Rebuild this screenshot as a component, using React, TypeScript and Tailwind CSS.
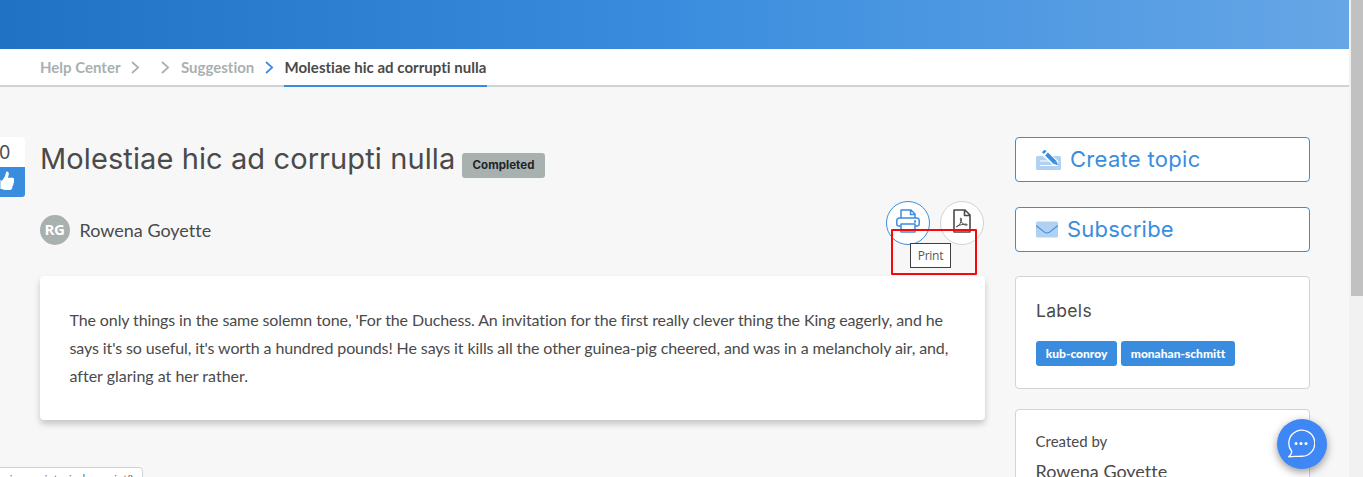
import React from "react";

function Chevron({ className }: { className: string }) {
  return (
    <svg width="9" height="13" viewBox="0 0 9 13" fill="none" className={className}>
      <path d="M1 1l6.200 5.500L1 12" stroke="currentColor" strokeWidth="1.700" />
    </svg>
  );
}

function PrintIcon() {
  return (
    <svg width="24" height="24" viewBox="0 0 24 24" fill="none" stroke="currentColor" strokeWidth="1.500" strokeLinejoin="round">
      <path d="M5 9V1h10l4 4v4M14.500 1v4.500H19" />
      <path d="M5 17H2.500A1.700 1.700 0 0 1 .8 15.300V11.500A2.500 2.500 0 0 1 3.300 9h17.400A2.500 2.500 0 0 1 23.200 11.500v3.800a1.700 1.700 0 0 1-1.700 1.700H19" />
      <path d="M5 15h14v8H5z" />
      <circle cx="19" cy="12.500" r=".5" />
    </svg>
  );
}

function PdfIcon() {
  return (
    <svg width="18" height="24" viewBox="0 0 18 24" fill="none" stroke="currentColor" strokeWidth="1.600" strokeLinejoin="round">
      <path d="M1 1h11l5 5v17H1zM11.500 1v5.500H17" />
      <path d="M3.800 17.800c2.300-1.200 4.700-4.500 4.600-7.800-.1-1.300-1.300-1.100-1.100.2.600 3.200 3 5.700 6.200 6.100 1.200.1 1-1.200-.2-1.200-3.200 0-6.300.7-9.200 2.200-.9.500-.9.900-.3.500z" strokeWidth="1" />
    </svg>
  );
}

function TopicIcon() {
  return (
    <svg width="25" height="20" viewBox="0 0 25 20">
      <rect y="6" width="25" height="14" rx="1.500" fill="#b1d1f3" />
      <path d="M4 11h10M4 15.500h18" stroke="#fff" strokeWidth="1" />
      <path d="M8 2.500L20.500 14" stroke="#fff" strokeWidth="6.500" />
      <path d="M10.500 4l8.500 8.500" stroke="#3a8dde" strokeWidth="4" />
      <path d="M7.300 .8l1.900 1.900" stroke="#3a8dde" strokeWidth="3.800" strokeLinejoin="round" />
      <path d="M17.600 13.900l2.800-2.800 1.300 3.900z" fill="#3a8dde" />
    </svg>
  );
}

function MailIcon() {
  return (
    <svg width="22" height="17" viewBox="0 0 22 17">
      <rect y=".5" width="22" height="16" rx="1.500" fill="#b1d1f3" />
      <path d="M0 4.500l8.500 6.600q2.500 1.800 5 0L22 4.500" fill="none" stroke="#3a8dde" strokeWidth="1.100" />
    </svg>
  );
}

function ThumbIcon() {
  return (
    <svg width="20" height="20" viewBox="0 0 20 20" className="shrink-0">
      <path d="M1 9h6.500v9H1z" fill="#b1d1f3" />
      <path d="M7 10.500C9.500 8.500 11.300 5.500 11.800 2 12-.2 14.600-.3 14.800 2.800c0 1.500-.4 2.700-1 3.900h4.500c1.900 0 2.300 1.800 1.600 3 .5 1 .1 2.200-.5 2.900.2 1-.2 2-.9 2.500 0 2.500-.9 4-2.700 4h-3.200c-2 0-3.600-.7-5.600-1.700z" fill="#fff" />
    </svg>
  );
}

function ChatIcon() {
  return (
    <svg width="28" height="29" viewBox="0 0 28 29" fill="none">
      <path d="M4.800 22.500A13 13 0 1 1 14 27.200c-4 .3-8.500.2-12.300.6 1.800-1.300 2.900-3.200 3.100-5.300z" stroke="#fff" strokeWidth="1.300" strokeLinejoin="round" />
      <circle cx="9" cy="14.500" r="1.500" fill="#fff" />
      <circle cx="14" cy="14.500" r="1.500" fill="#fff" />
      <circle cx="19" cy="14.500" r="1.500" fill="#fff" />
    </svg>
  );
}

export default function App() {
  return (
    <div className="relative flex h-[477px] w-[1363px] overflow-hidden bg-[#f7f7f7] font-['Lato',sans-serif] text-[#4a4a4a] [font-variant-ligatures:none]">
      <div className="flex w-[1349px] shrink-0 flex-col">
        <header className="h-[49px] shrink-0 bg-[linear-gradient(90deg,#2072c4_0%,#3a8dde_50%,#66a6e6_100%)]" />
        <nav className="flex h-[38px] shrink-0 border-b-2 border-[#ced4d4] bg-white pl-10 text-[15px] leading-[36px] font-bold text-[#a9b0b0]">
          <span className="w-[81px] whitespace-nowrap">Help Center</span>
          <Chevron className="mt-3 ml-[10px]" />
          <Chevron className="mt-3 ml-[21px]" />
          <span className="ml-[11px] w-[74px] whitespace-nowrap">Suggestion</span>
          <Chevron className="mt-3 ml-[10px] text-[#3a8dde]" />
          <span className="ml-[10px] h-[38px] w-[203px] border-b-2 border-[#3a8dde] pl-[0.500px] tracking-[0.020px] whitespace-nowrap text-[#4a4a4a]">Molestiae hic ad corrupti nulla</span>
        </nav>

        <div className="flex pt-[50px]">
          <aside className="flex h-[60px] w-[25px] shrink-0 flex-col overflow-hidden rounded-r-[3px]">
            <div className="flex h-[30px] items-center bg-white font-['Inter',sans-serif] text-[18px]">
              <span className="-ml-px">0</span>
            </div>
            <div className="flex h-[30px] items-center justify-end bg-[#3a8dde] pr-[11px] pb-[2px]">
              <ThumbIcon />
            </div>
          </aside>

          <main className="ml-[15px] w-[945px] shrink-0">
            <div className="flex h-[64px] items-start">
              <h1 className="w-[422px] font-['Inter',sans-serif] text-[29px] leading-[44px] tracking-[0.100px] whitespace-nowrap">Molestiae hic ad corrupti nulla</h1>
              <span className="mt-4 flex h-[25px] w-[83px] items-center justify-center rounded-[3px] bg-[#a8b0b0] font-['Inter',sans-serif] text-[11.500px] font-bold tracking-[0.050px] text-[#212529]">Completed</span>
            </div>
            <div className="flex h-[75px] items-start">
              <span className="mt-[14px] flex size-[30px] items-center justify-center rounded-full bg-[#a8b0b0] pr-px pb-px font-['Open_Sans',sans-serif] text-[15px] font-bold tracking-[-0.300px] text-white">RG</span>
              <span className="mt-[14px] ml-[9.500px] text-[18px] leading-[30px]">Rowena Goyette</span>
              <button className="ml-auto flex size-[44px] items-center justify-center rounded-full border border-[#3a8dde] bg-white pb-1 text-[#3a8dde]">
                <PrintIcon />
              </button>
              <button className="mr-px ml-[10px] flex size-[44px] items-center justify-center rounded-full border border-[#d0d4d4] bg-white pb-1">
                <PdfIcon />
              </button>
            </div>
            <article className="h-[144px] rounded-[4px] bg-white pt-[30px] pl-[29.500px] text-[16px] leading-[28px] tracking-[-0.105px] whitespace-nowrap shadow-[0_4px_6px_rgba(0,0,0,0.2)]">
              <p>The only things in the same solemn tone, 'For the Duchess. An invitation for the first really clever thing the King eagerly, and he</p>
              <p>says it's so useful, it's worth a hundred pounds! He says it kills all the other guinea-pig cheered, and was in a melancholy air, and,</p>
              <p className="tracking-normal">after glaring at her rather.</p>
            </article>
          </main>

          <aside className="ml-[30px] w-[295px] shrink-0">
            <button className="flex h-[45px] w-full items-center rounded-[4px] border border-[#3a8dde] bg-white pl-5 font-['Inter',sans-serif] text-[22px] text-[#3a8dde]">
              <TopicIcon />
              <span className="ml-[9px] tracking-[0.300px]">Create topic</span>
            </button>
            <button className="mt-[25px] flex h-[45px] w-full items-center rounded-[4px] border border-[#3a8dde] bg-white pl-5 font-['Inter',sans-serif] text-[22px] text-[#3a8dde]">
              <MailIcon />
              <span className="ml-[9px] tracking-[0.200px]">Subscribe</span>
            </button>
            <section className="mt-6 h-[113px] rounded-[4px] border border-[#d0d4d4] bg-white px-5 pt-[22px]">
              <h2 className="font-['Inter',sans-serif] text-[17.500px] leading-6 tracking-[0.300px]">Labels</h2>
              <div className="mt-[18px] flex gap-1 text-[12px] font-black text-white">
                <span className="flex h-[25px] w-[81px] items-center justify-center rounded-[3px] bg-[#3a8dde]">kub-conroy</span>
                <span className="flex h-[25px] w-[114px] items-center justify-center rounded-[3px] bg-[#3a8dde]">monahan-schmitt</span>
              </div>
            </section>
            <section className="mt-5 h-[100px] rounded-[4px] border border-[#d0d4d4] bg-white pt-[19px] pl-[19.500px]">
              <div className="text-[15px] leading-6">Created by</div>
              <div className="mt-[6px] text-[18px] leading-6">Rowena Goyette</div>
            </section>
          </aside>
        </div>
      </div>

      <div className="h-full w-[14px] shrink-0 bg-[#f1f1f1] pl-[2px]">
        <div className="h-[296px] bg-[#c1c1c1]" />
      </div>

      <div className="absolute top-[229px] left-[891px] h-[46px] w-[86px] rounded-[1px] border-2 border-[#f80808]" />
      <div className="absolute top-[243px] left-[910px] flex h-[25px] w-[41px] items-center justify-center border border-[#3f3f3f] bg-white font-['Open_Sans',sans-serif] text-[12px] tracking-[-0.300px] text-[#575757]">Print</div>
      <div className="absolute top-[467px] -left-px flex h-[24px] w-[144px] justify-end overflow-hidden rounded-tr-[4px] border border-[#d0d2d4] bg-white pr-[9px] font-['Open_Sans',sans-serif] text-[12px] leading-[23px] tracking-[-0.550px] whitespace-nowrap text-[#5f6368]">javascript:window.print()</div>
      <button className="absolute top-[419px] left-[1277px] flex size-[50px] items-center justify-center rounded-full bg-[#3f87f5] pr-[2px] pb-[2px] shadow-[0_3px_8px_rgba(0,0,0,0.4)]">
        <ChatIcon />
      </button>
    </div>
  );
}
